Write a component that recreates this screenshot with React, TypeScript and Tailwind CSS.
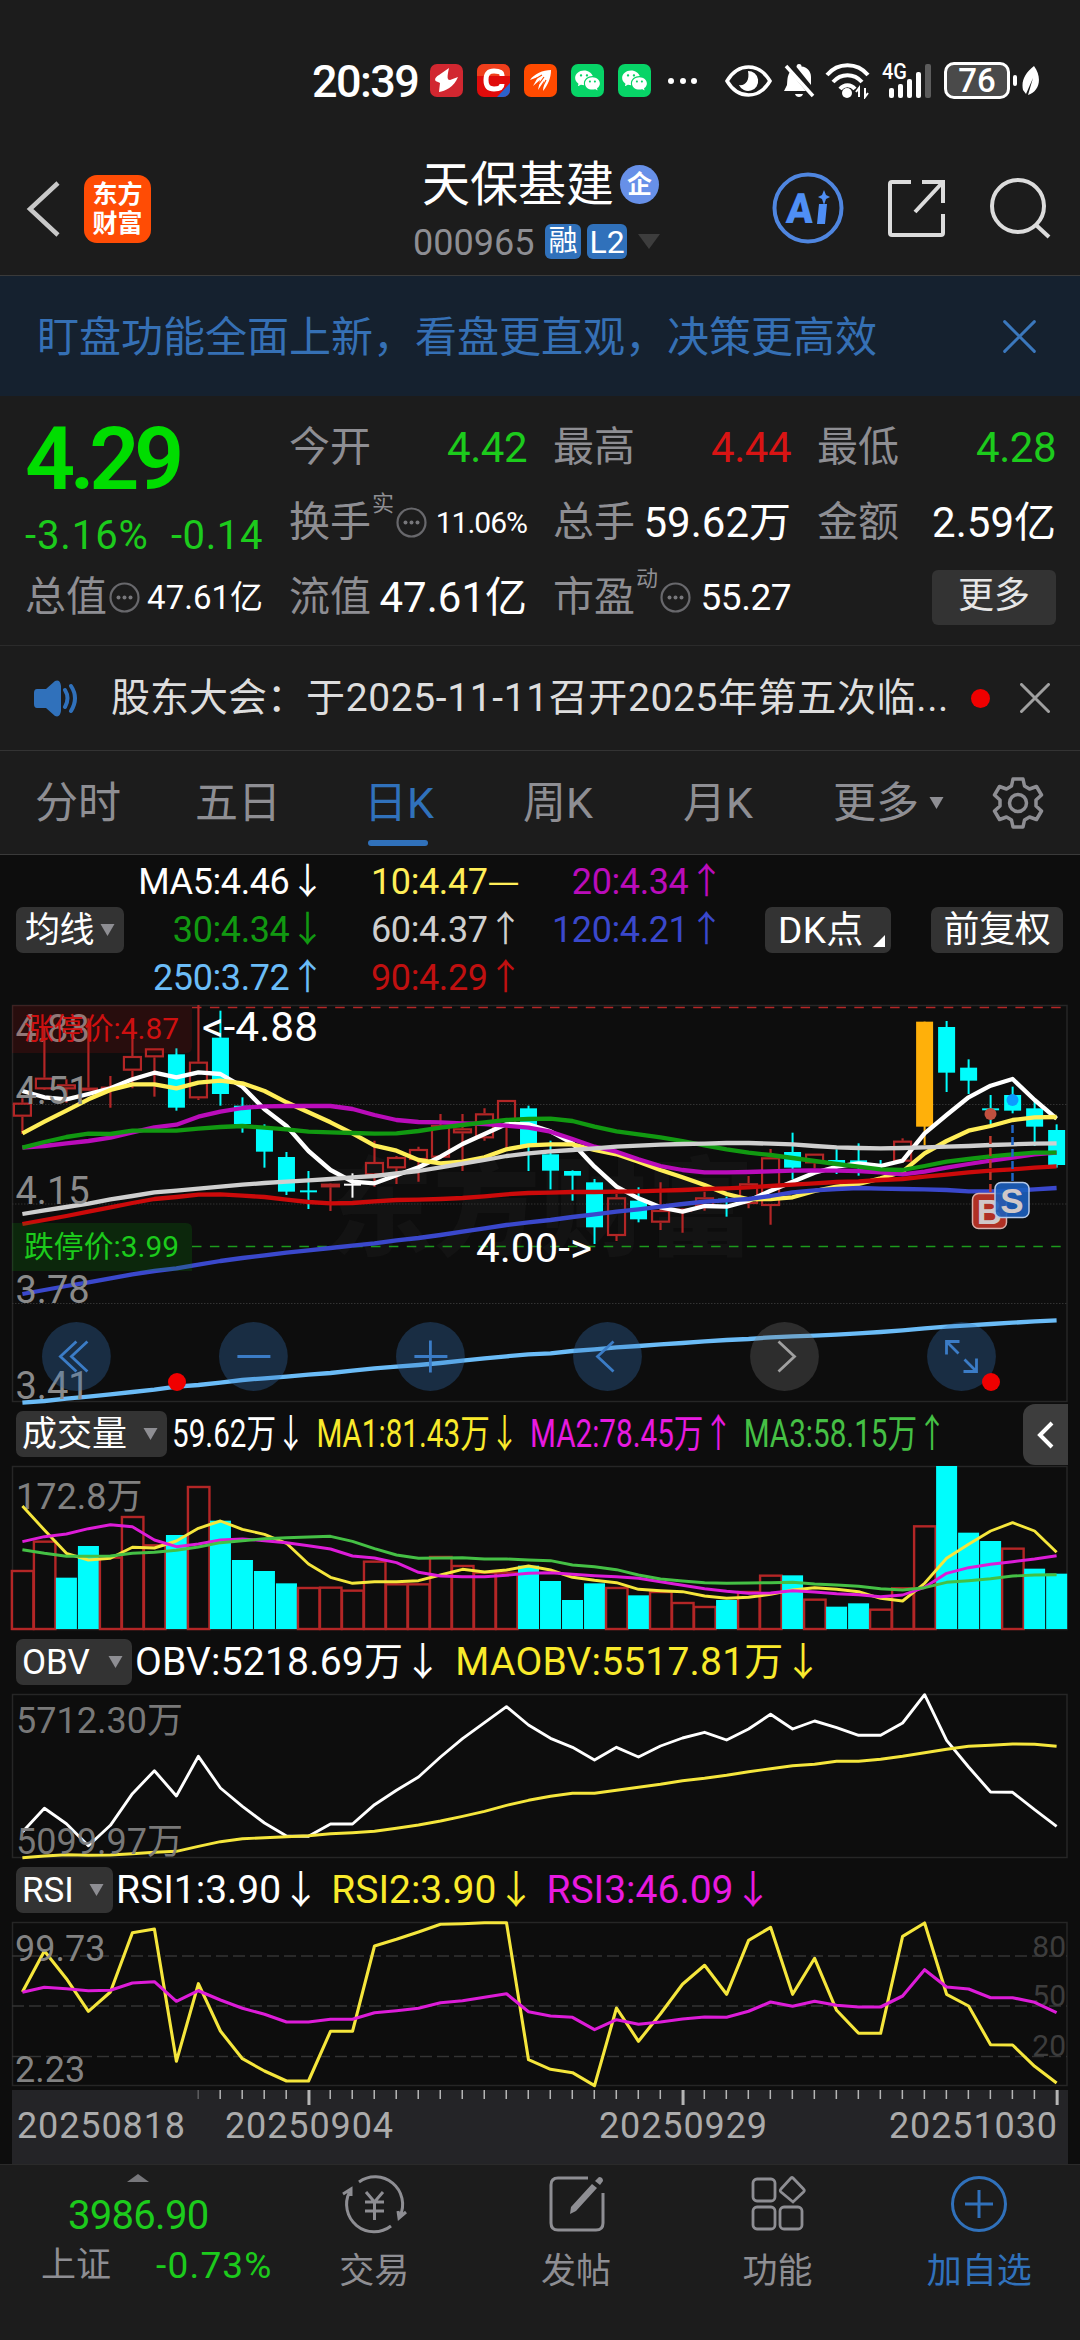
import type { ReactNode } from "react";
import { RiWechatFill } from "react-icons/ri";

// Plot values are stored as depth below the panel top, 3 units per pixel.
const STEP = 22.005;
const px = (i: number) => 10.4 + i * STEP;

// [kind, body top, body bottom, high, low]
type Candle = ["r" | "c" | "w" | "o", number, number, number, number];

const CANDLES: Candle[] = [
  ["r", 338, 380, 325, 432], ["r", 263, 298, 110, 300], ["r", 283, 298, 268, 338],
  ["r", 293, 300, 85, 300], ["r", 290, 298, 258, 353], ["r", 198, 242, 85, 295],
  ["r", 175, 202, 175, 320], ["c", 193, 353, 175, 362], ["r", 215, 325, 45, 330],
  ["c", 143, 312, 62, 347], ["c", 347, 402, 322, 428], ["c", 415, 485, 403, 533],
  ["c", 501, 605, 486, 615], ["c", 601, 604, 543, 657], ["r", 581, 592, 580, 663],
  ["w", 581, 585, 550, 623], ["r", 516, 556, 452, 590], ["r", 501, 535, 498, 582],
  ["r", 477, 510, 470, 575], ["r", 405, 503, 372, 503], ["r", 415, 430, 372, 543],
  ["r", 370, 445, 355, 452], ["r", 330, 408, 330, 475], ["c", 355, 465, 347, 543],
  ["c", 493, 542, 452, 598], ["c", 543, 557, 541, 632], ["c", 577, 712, 567, 762],
  ["r", 622, 738, 612, 753], ["c", 632, 688, 592, 697], ["r", 660, 698, 577, 720],
  ["r", 656, 659, 655, 728], ["r", 622, 648, 605, 662], ["c", 626, 634, 620, 680],
  ["r", 580, 642, 558, 655], ["r", 502, 648, 477, 704], ["c", 486, 533, 428, 568],
  ["r", 491, 520, 491, 535], ["c", 510, 520, 478, 552], ["c", 511, 520, 460, 557],
  ["c", 522, 528, 510, 532], ["r", 452, 515, 445, 515], ["o", 95, 410, 95, 465],
  ["c", 111, 248, 93, 306], ["c", 233, 272, 208, 312], ["c", 355, 360, 315, 405],
  ["c", 315, 362, 290, 370], ["c", 355, 410, 335, 468], ["c", 420, 525, 403, 533],
];

const MA_LINES: { color: string; values: number[] }[] = [
  { color: "#ffffff", values: [303, 322, 328, 312, 295, 268, 248, 262, 247, 252, 290, 358, 408, 483, 540, 575, 580, 556, 532, 500, 462, 432, 402, 403, 424, 460, 530, 590, 625, 652, 665, 648, 650, 632, 602, 575, 548, 530, 520, 528, 512, 430, 375, 322, 287, 267, 330, 386] },
  { color: "#ffee58", values: [430, 395, 362, 328, 300, 283, 283, 295, 278, 272, 280, 303, 337, 367, 397, 430, 467, 482, 510, 520, 515, 502, 478, 466, 463, 463, 480, 493, 515, 540, 562, 585, 612, 628, 627, 622, 603, 590, 582, 565, 545, 490, 453, 422, 408, 390, 382, 381] },
  { color: "#ba0cba", values: [473, 468, 460, 453, 443, 427, 412, 404, 380, 365, 354, 349, 348, 348, 348, 357, 375, 390, 396, 397, 400, 402, 407, 413, 425, 447, 470, 485, 508, 528, 540, 547, 547, 546, 544, 542, 541, 542, 543, 547, 553, 545, 533, 522, 512, 503, 493, 488] },
  { color: "#119911", values: [473, 456, 441, 431, 432, 422, 422, 422, 416, 411, 408, 413, 418, 425, 427, 429, 431, 430, 423, 413, 405, 397, 390, 387, 386, 393, 410, 424, 433, 442, 453, 466, 478, 488, 495, 504, 513, 522, 530, 538, 540, 528, 515, 507, 499, 493, 488, 488] },
  { color: "#cfcfcf", values: [672, 661, 651, 641, 628, 618, 607, 602, 596, 590, 584, 579, 575, 571, 567, 562, 558, 550, 543, 532, 521, 510, 498, 490, 484, 480, 475, 470, 467, 464, 462, 461, 459, 459, 461, 463, 468, 472, 474, 475, 474, 472, 470, 468, 465, 463, 461, 460] },
  { color: "#cc0a0a", values: [702, 690, 678, 665, 652, 639, 627, 621, 614, 613, 617, 621, 629, 636, 640, 639, 634, 630, 629, 627, 624, 619, 613, 609, 608, 606, 606, 605, 604, 602, 600, 597, 595, 592, 588, 584, 580, 576, 574, 570, 567, 560, 554, 547, 542, 538, 533, 529] },
  { color: "#3a48cc", values: [912, 900, 888, 877, 865, 853, 843, 835, 824, 813, 804, 796, 788, 781, 774, 767, 760, 751, 744, 735, 725, 715, 705, 697, 690, 681, 673, 665, 658, 650, 642, 635, 631, 627, 618, 607, 601, 597, 594, 596, 597, 598, 600, 604, 604, 602, 598, 594] },
  { color: "#6bbcf7", values: [1238, 1233, 1226, 1220, 1213, 1206, 1199, 1190, 1185, 1178, 1170, 1165, 1160, 1154, 1149, 1142, 1135, 1130, 1125, 1119, 1112, 1105, 1099, 1093, 1090, 1083, 1078, 1072, 1068, 1063, 1059, 1054, 1050, 1047, 1042, 1039, 1037, 1034, 1030, 1026, 1021, 1015, 1010, 1006, 1002, 998, 994, 991] },
];

// "+" closes up (hollow), "-" closes down (solid)
const VOLUME =
  "510+ 422+ 533- 438- 470+ 348+ 433+ 405- 258+ 362- 480- 513- 550- 561+ 560+ 569+ 482+ 550+ 550+ 468+ 495+ 515+ 515+ 497- 543- 600- 550- 561+ 586- 573+ 606+ 618+ 600- 573+ 524+ 526- 596+ 620- 610- 626+ 562+ 376+ 198- 398- 423- 443+ 506- 521-"
    .split(" ")
    .map((v) => ({ top: parseInt(v, 10), up: v.endsWith("+") }));

const VOL_LINES = [
  { color: "#f5e63c", values: [318, 390, 460, 480, 475, 442, 444, 423, 385, 363, 388, 403, 430, 492, 532, 550, 545, 545, 542, 525, 508, 516, 510, 498, 510, 532, 541, 548, 568, 572, 575, 588, 595, 592, 583, 570, 563, 568, 575, 595, 603, 550, 475, 433, 393, 368, 393, 457] },
  { color: "#dd1cd8", values: [425, 410, 402, 386, 374, 380, 420, 440, 432, 420, 417, 422, 428, 437, 447, 468, 474, 488, 517, 528, 530, 530, 526, 520, 518, 523, 527, 530, 535, 545, 556, 566, 574, 580, 579, 572, 576, 581, 584, 590, 585, 562, 520, 503, 493, 485, 477, 467] },
  { color: "#45c045", values: [449, 460, 469, 469, 468, 460, 457, 451, 441, 428, 422, 416, 413, 411, 409, 424, 446, 465, 475, 474, 473, 477, 477, 480, 482, 495, 500, 509, 525, 537, 543, 548, 550, 549, 548, 547, 552, 555, 559, 566, 570, 563, 547, 542, 536, 528, 525, 524] },
];

const OBV_LINES = [
  { color: "#ffffff", values: [575, 504, 550, 616, 555, 460, 391, 467, 348, 443, 498, 548, 587, 588, 551, 551, 493, 450, 410, 350, 295, 247, 199, 254, 294, 321, 359, 321, 350, 317, 293, 276, 299, 266, 222, 266, 242, 262, 285, 285, 248, 163, 300, 380, 455, 456, 508, 558] },
  { color: "#f5e63c", values: [652, 647, 643, 645, 644, 640, 636, 633, 618, 604, 595, 592, 589, 586, 580, 577, 573, 564, 554, 542, 528, 513, 495, 480, 468, 459, 459, 450, 441, 432, 421, 414, 405, 394, 385, 376, 372, 363, 363, 357, 348, 337, 327, 318, 315, 311, 312, 318] },
];

const RSI_LINES = [
  { color: "#f5e63c", values: [395, 272, 355, 453, 395, 217, 206, 603, 370, 512, 595, 632, 662, 662, 513, 513, 257, 237, 215, 192, 190, 187, 187, 598, 627, 637, 676, 443, 543, 460, 372, 315, 402, 240, 201, 402, 294, 450, 519, 519, 228, 188, 402, 437, 553, 554, 618, 668] },
  { color: "#dd1cd8", values: [396, 381, 385, 391, 390, 368, 364, 423, 391, 419, 444, 462, 485, 485, 477, 477, 457, 451, 444, 427, 421, 411, 400, 454, 467, 471, 508, 478, 492, 485, 476, 470, 471, 453, 425, 438, 423, 435, 440, 440, 407, 328, 380, 386, 412, 412, 426, 457] },
];

const RED = "#b32626";
const CYAN = "#00fdfd";

function Line({ values, color, base, width }: { values: number[]; color: string; base: number; width: number }) {
  const points = values.map((v, i) => `${px(i).toFixed(1)},${((v - base) / 3).toFixed(1)}`).join(" ");
  return <polyline points={points} fill="none" stroke={color} strokeWidth={width} strokeLinejoin="round" />;
}

function Panel({ height, children }: { height: number; children: ReactNode }) {
  return (
    <svg className="mx-3 block overflow-visible" width="1056" height={height} viewBox={`0 0 1056 ${height}`}>
      <rect x="0.5" y="0.5" width="1054.5" height={height - 1} fill="none" stroke="#262626" strokeWidth="1.5" />
      {children}
    </svg>
  );
}

function Triangle({ className }: { className?: string }) {
  return (
    <svg className={className} width="15" height="12" viewBox="0 0 14 12" fill="#8e8e93">
      <path d="M0 0h14L7 12z" />
    </svg>
  );
}

function Cross({ size, color, width }: { size: number; color: string; width: number }) {
  return (
    <svg width={size} height={size} viewBox="0 0 30 30" stroke={color} strokeWidth={width} strokeLinecap="round">
      <path d="M1.500 1.500 28.500 28.500M28.500 1.500 1.500 28.500" />
    </svg>
  );
}

function StatusBar() {
  return (
    <div className="flex h-[130px] items-center pt-[31px] pl-[312px] text-white">
      <span className="w-[118px] pt-[2px] text-[45px] leading-none font-medium tracking-[-1.600px]">20:39</span>
      <div className="flex gap-[14px]">
        <svg width="33" height="33" viewBox="0 0 33 33">
          <rect width="33" height="33" rx="7" fill="#d12730" />
          <path d="M19 4 9 11c-5 3-5 6-1 7l2 1-1 9c6-1 15-5 19-15l-8 3c-3 0-3-3-1-12z" fill="#fff" />
        </svg>
        <svg width="33" height="33" viewBox="0 0 33 33">
          <rect width="33" height="33" rx="7" fill="#e00b0b" />
          <path d="M0 12V7a7 7 0 0 1 7-7h19a7 7 0 0 1 7 7v5z" fill="#ef3f1c" />
          <path d="M33 19v7a7 7 0 0 1-7 7h-6z" fill="#2b62cc" />
          <path d="M25 12v-1c0-3-3-4-8-4s-8 2-8 9 3 9 8 9 8-1 8-5" fill="none" stroke="#fff" strokeWidth="5" />
        </svg>
        <svg width="33" height="33" viewBox="0 0 33 33">
          <rect width="33" height="33" rx="7" fill="#ff4a00" />
          <path d="M27 6C19 6 10 10 6 16l8-3-5 9 7-6-2 10 6-9-1 10c5-6 8-13 8-21z" fill="#fff" />
          <path d="m8 17 10-6M12 24l8-11M16 28l6-12" stroke="#ff4a00" strokeWidth="1.200" />
        </svg>
        {[0, 1].map((n) => (
          <span key={n} className="flex h-[33px] w-[33px] items-center justify-center rounded-[7px] bg-[#07d467]">
            <RiWechatFill size={27} />
          </span>
        ))}
      </div>
      <div className="ml-[17px] flex w-[29px] justify-between">
        <i className="h-[6px] w-[6px] rounded-full bg-white" />
        <i className="h-[6px] w-[6px] rounded-full bg-white" />
        <i className="h-[6px] w-[6px] rounded-full bg-white" />
      </div>
      <svg className="ml-[28px]" width="47" height="32" viewBox="0 0 47 32">
        <path d="M2 16C8 6 15 2 23.500 2S39 6 45 16C39 26 32 30 23.500 30S8 26 2 16z" fill="none" stroke="#fff" strokeWidth="3.500" />
        <path d="M23 6a10 10 0 1 1-9 14c6 1 11-4 9-14z" fill="#fff" />
      </svg>
      <svg className="ml-[11px]" width="32" height="36" viewBox="0 0 32 36">
        <path d="M16 1c-2 0-2.500 1.500-2.500 3L28 22V14c0-6-4-10-9.500-10.500C18.500 2 18 1 16 1zM7 9c-3 4-2.500 9-3 13l-3 6h22zM12 31h8c-1 4-7 4-8 0z" fill="#fff" />
        <path d="m3 3 27 30" stroke="#fff" strokeWidth="3.500" />
      </svg>
      <svg className="ml-[10px]" width="45" height="36" viewBox="0 0 45 36" fill="none" stroke="#fff" strokeWidth="4">
        <path d="M2 12C13-1 32-1 43 12M8 19c8-9 21-9 29 0M15 26c4-5 11-5 15 0" />
        <circle cx="22" cy="30" r="5" fill="#fff" stroke="none" />
        <path d="M34 34v-9l-3 4M40 25v9l3-4" strokeWidth="2" />
      </svg>
      <svg className="ml-[12px] overflow-visible" width="50" height="36" viewBox="0 0 50 36">
        <text x="0" y="16" fontSize="22" fontWeight="500" fill="#fff" textLength="25" lengthAdjust="spacingAndGlyphs">4G</text>
        <g fill="#fff">
          <rect x="7" y="25" width="5" height="10" rx="2" />
          <rect x="16" y="21" width="5" height="14" rx="2" />
          <rect x="25" y="16" width="5" height="19" rx="2" />
          <rect x="34" y="9" width="5" height="26" rx="2" />
          <rect x="43" y="1" width="6" height="34" rx="2" fill="#5c5c5c" />
        </g>
      </svg>
      <span className="ml-[12px] flex h-[37px] w-[66px] items-center justify-center rounded-[10px] border-[3px] border-white bg-[#4a4a4a] text-[33px] leading-none font-medium">
        76
      </span>
      <i className="ml-[3px] h-[11px] w-[4px] rounded-sm bg-white" />
      <svg className="ml-[5px]" width="19" height="30" viewBox="0 0 19 30">
        <path d="M12 0C3 7-1 15 1 24l3 4L11 12 6 29c11-3 15-17 6-29z" fill="#fff" />
      </svg>
    </div>
  );
}

function Header() {
  return (
    <div className="relative flex h-[146px] items-center border-b border-[#3a3a3a] px-[26px] pt-[12px]">
      <svg width="34" height="56" viewBox="0 0 34 56" fill="none" stroke="#c8c8c8" strokeWidth="4.500">
        <path d="M32 2 4 28l28 26" />
      </svg>
      <div className="ml-[24px] flex h-[68px] w-[67px] flex-col items-center justify-center rounded-[13px] bg-[#ff4c05] text-[25px] leading-[29px] font-bold text-white">
        <span>东方</span>
        <span>财富</span>
      </div>
      <div className="ml-[262px] flex w-[266px] flex-col pt-[3px]">
        <div className="ml-[9px] flex items-center">
          <span className="text-[48px] leading-[56px] whitespace-nowrap text-white">天保基建</span>
          <span className="ml-[6px] flex h-[39px] w-[39px] shrink-0 items-center justify-center rounded-full bg-[#6790e8] text-[25px] font-bold text-white">
            企
          </span>
        </div>
        <div className="mt-[7px] flex h-[44px] items-center">
          <span className="w-[132px] pt-[2px] text-[36px] leading-none text-[#8e8e93]">000965</span>
          <span className="flex h-[35px] w-[36px] items-center justify-center rounded-[6px] bg-[#3071bb] text-[29px] leading-none text-white">融</span>
          <span className="ml-[6px] flex h-[35px] w-[40px] items-center justify-center rounded-[6px] bg-[#3071bb] text-[32px] leading-none text-white">L2</span>
          <svg className="ml-[11px]" width="22" height="15" viewBox="0 0 22 15">
            <path d="M0 0h22L11 15z" fill="#3d3d3d" />
          </svg>
        </div>
      </div>
      <svg className="absolute top-[42px] left-[772px]" width="72" height="72" viewBox="0 0 72 72">
        <circle cx="36" cy="36" r="33.500" fill="none" stroke="#4f86e0" strokeWidth="4" />
        <text x="17" y="51" fontSize="42" fontWeight="900" fill="#4f8ff5" transform="skewX(-4)" textLength="27" lengthAdjust="spacingAndGlyphs">A</text>
        <path d="M47 32h8l-2 20h-8zM52 18l2 5 4 2-4 2-2 6-2-6-4-2 4-2z" fill="#4f8ff5" />
      </svg>
      <svg className="absolute top-[49px] left-[887px]" width="59" height="59" viewBox="0 0 59 59" fill="none" stroke="#dcdcdc" strokeWidth="4">
        <path d="M24 3H5q-2 0-2 2v49q0 2 2 2h49q2 0 2-2V35M35 3h21v21M55 4 28 33" />
      </svg>
      <svg className="absolute top-[47px] left-[990px]" width="62" height="62" viewBox="0 0 62 62" fill="none" stroke="#dcdcdc" strokeWidth="4">
        <circle cx="28" cy="29" r="26" />
        <path d="m46 48 13 12" />
      </svg>
    </div>
  );
}

function Banner() {
  return (
    <div className="flex h-[120px] items-center bg-[#15212f] pl-[37px]">
      <span className="w-[966px] pt-[3px] text-[42px] leading-none text-[#3570b5]">盯盘功能全面上新，看盘更直观，决策更高效</span>
      <Cross size={33} color="#3b78bd" width={2.7} />
    </div>
  );
}

function Info() {
  return (
    <svg className="ml-[2px]" width="31" height="31" viewBox="0 0 31 31" fill="#77777b">
      <circle cx="15.500" cy="15.500" r="14" fill="none" stroke="#68686c" strokeWidth="2.200" />
      <circle cx="9.500" cy="15.500" r="2" />
      <circle cx="15.500" cy="15.500" r="2" />
      <circle cx="21.500" cy="15.500" r="2" />
    </svg>
  );
}

function Quote({ label, sup, info, children }: { label: string; sup?: string; info?: boolean; children: ReactNode }) {
  return (
    <div className="flex h-[75px] items-center justify-between whitespace-nowrap">
      <span className="flex items-center text-[41px] leading-none text-[#8e8e93]">
        {label}
        {sup && <sup className="top-[-19px] ml-[1px] text-[22px] leading-none">{sup}</sup>}
        {info && <Info />}
      </span>
      {children}
    </div>
  );
}

function Quotes() {
  return (
    <div className="flex h-[250px] gap-[26px] border-b border-[#2b2b2b] pt-[14px] pr-[24px] pl-[25px] text-[42px] leading-none text-white">
      <div className="w-[238px]">
        <div className="h-[92px] pt-[5px] text-[88px] leading-none font-semibold tracking-[-5.500px] text-[#00dd00]">4.29</div>
        <div className="flex h-[58px] items-center justify-between pt-[9px] text-[40px] text-[#1ccb1c]">
          <span className="tracking-[0.900px]">-3.16%</span>
          <span className="tracking-[0.600px]">-0.14</span>
        </div>
        <Quote label="总值" info>
          <span className="text-[33px]">47.61亿</span>
        </Quote>
      </div>
      <div className="w-[238px]">
        <Quote label="今开"><span className="tracking-[-0.500px] text-[#1ccb1c]">4.42</span></Quote>
        <Quote label="换手" sup="实" info><span className="text-[30px] tracking-[-1px]">11.06%</span></Quote>
        <Quote label="流值"><span>47.61亿</span></Quote>
      </div>
      <div className="w-[238px]">
        <Quote label="最高"><span className="tracking-[-0.500px] text-[#d81414]">4.44</span></Quote>
        <Quote label="总手"><span>59.62万</span></Quote>
        <Quote label="市盈" sup="动" info><span className="text-[37px] tracking-[-0.500px]">55.27</span></Quote>
      </div>
      <div className="w-[239px]">
        <Quote label="最低"><span className="tracking-[-0.500px] text-[#1ccb1c]">4.28</span></Quote>
        <Quote label="金额"><span>2.59亿</span></Quote>
        <div className="flex h-[75px] items-center justify-end">
          <span className="flex h-[55px] w-[124px] items-center justify-center rounded-[6px] bg-[#333] pb-[4px] text-[36px] text-[#e6e6e6]">更多</span>
        </div>
      </div>
    </div>
  );
}

function News() {
  return (
    <div className="flex h-[105px] items-center border-b border-[#333] pl-[33px]">
      <svg width="46" height="37" viewBox="0 0 46 37">
        <path d="M4 9h9l9-8q5-2 6 5v25q-1 7-6 5l-9-8H4q-3 0-3-4V13q0-4 3-4z" fill="#3071bb" />
        <path d="M32 10q5 8 0 17M38 6q8 12 0 25" fill="none" stroke="#3071bb" strokeWidth="4" strokeLinecap="round" />
      </svg>
      <span className="ml-[32px] w-[860px] text-[39px] leading-none whitespace-nowrap text-[#dedede]">
        股东大会：<span className="tracking-[0.620px]">于2025-11-11召开2025年第五次临...</span>
      </span>
      <i className="h-[19px] w-[19px] rounded-full bg-[#f00000]" />
      <span className="ml-[30px]"><Cross size={30} color="#a0a0a0" width={3} /></span>
    </div>
  );
}

const TABS = ["分时", "五日", "日K", "周K", "月K"];

function Tabs() {
  return (
    <div className="flex h-[104px] items-center border-b border-[#3a3a3a] text-[43px] leading-none text-[#8e8e93]">
      {TABS.map((t) => (
        <div
          key={t}
          className={t === "日K" ? "relative flex h-full w-[160px] items-center justify-center pt-[2px] pr-[2px] text-[#3071bb]" : "flex h-full w-[160px] items-center justify-center pt-[2px] pr-[4px]"}
        >
          {t}
          {t === "日K" && <i className="absolute bottom-[8px] left-[48px] h-[6px] w-[60px] rounded-full bg-[#3071bb]" />}
        </div>
      ))}
      <span className="ml-[33px] w-[96px] pt-[2px]">更多</span>
      <Triangle />
      <svg className="ml-[48px]" width="52" height="52" viewBox="0 0 52 52" fill="none" stroke="#8e8e93" strokeWidth="3.500" strokeLinejoin="round">
        <path d="M21 2h10l1.500 7 5 3 7-2.500 5 8.500-5.500 5v6l5.500 5-5 8.500-7-2.500-5 3-1.500 7H21l-1.500-7-5-3-7 2.500-5-8.500L8 29v-6l-5.500-5 5-8.500 7 2.500 5-3z" />
        <circle cx="26" cy="26" r="8.500" />
      </svg>
    </div>
  );
}

const PILL = "flex h-[46px] shrink-0 items-center rounded-[7px] bg-[#333] text-[35px] leading-none text-white";

function MaLegend() {
  return (
    <div className="flex h-[150px] items-center pl-4 text-[36px] leading-[48px] tracking-[-0.400px] whitespace-nowrap text-white">
      <div className={`${PILL} w-[108px] pl-[9px]`}>
        均线
        <Triangle className="ml-[6px]" />
      </div>
      <div className="grid grid-cols-[201px_204px_195px] grid-rows-[48px_48px_48px]">
        <span className="text-right">MA5:4.46↓</span>
        <span className="pl-[46px] text-[#ffee58]">10:4.47<span className="font-['Noto_Sans_CJK_SC'] leading-none">—</span></span>
        <span className="text-right text-[#ba0cba]">20:4.34↑</span>
        <span className="text-right text-[#119911]">30:4.34↓</span>
        <span className="pl-[46px] text-[#cfcfcf]">60:4.37↑</span>
        <span className="text-right text-[#3a48cc]">120:4.21↑</span>
        <span className="text-right text-[#6bbcf7]">250:3.72↑</span>
        <span className="pl-[46px] text-[#c01010]">90:4.29↑</span>
      </div>
      <div className={`${PILL} relative ml-[41px] w-[126px] pl-[13px]`}>
        <span className="text-[37px] tracking-[0.400px]">DK点</span>
        <svg className="absolute right-[6px] bottom-[6px]" width="12" height="12" viewBox="0 0 12 12">
          <path d="M12 0v12H0z" fill="#fff" />
        </svg>
      </div>
      <div className={`${PILL} ml-[40px] w-[132px] justify-center`}>
        <span className="text-[36px]">前复权</span>
      </div>
    </div>
  );
}

function CandleMark({ i, c }: { i: number; c: Candle }) {
  const [kind, top, bottom, high, low] = c;
  const y = (v: number) => (v - 45) / 3;
  const x = px(i);
  const color = { r: RED, c: CYAN, w: "#fff", o: "#ffb00a" }[kind];
  if (kind === "r") {
    return (
      <g stroke={color} strokeWidth="2.200" fill="none">
        <path d={`M${x} ${y(high)}V${y(top)}M${x} ${y(bottom)}V${y(low)}`} />
        <rect x={x - 8.5} y={y(top) + 1} width="17" height={Math.max(y(bottom) - y(top) - 2, 1)} />
      </g>
    );
  }
  return (
    <g fill={color}>
      <rect x={x - 1} y={y(high)} width="2" height={y(low) - y(high)} />
      <rect x={x - 8.5} y={y(top)} width="17" height={Math.max(y(bottom) - y(top), 2)} />
    </g>
  );
}

const BUTTONS = [
  { cx: 64.4, d: "M0-15-16 0 0 15M11-15-5 0 11 15" },
  { cx: 241.4, d: "M-16 0H17" },
  { cx: 418.4, d: "M-16 0H17M0-16V16" },
  { cx: 595.5, d: "M6-15-10 0 6 15" },
  { cx: 772.5, d: "M-6-15 10 0-6 15", dim: true },
  { cx: 949.5, d: "M-2-15H-15V-2M-15-15-3-3M3 3 15 15M2 15H15V2" },
];

function KChart() {
  return (
    <Panel height={397}>
      <text x="314" y="242" fontSize="107" fontWeight="900" fill="#131313">东方财富</text>
      <g stroke="#333" strokeDasharray="1.500 1.500">
        <path d="M0 99.500H1055M0 199H1055M0 298.500H1055" />
      </g>
      <g fill="none" strokeWidth="1.500" strokeDasharray="9.500 8.400">
        <path d="M180 2.500H1055" stroke="#b32626" />
        <path d="M180 241.500H1055" stroke="#1d9a1d" />
      </g>
      {CANDLES.map((c, i) => (
        <CandleMark key={i} i={i} c={c} />
      ))}
      {MA_LINES.map((l) => (
        <Line key={l.color} {...l} base={45} width={4.3} />
      ))}
      {/* trade markers */}
      <g fill="none" strokeWidth="2.500" strokeDasharray="8 4">
        <path d="M978.400 131V188" stroke="#c0392b" />
        <path d="M1000.500 120V178" stroke="#1f66c8" />
      </g>
      <circle cx="978.500" cy="109" r="6" fill="#c0503f" />
      <circle cx="1000.500" cy="95" r="6" fill="#0d9bff" />
      <g fontSize="35" fontWeight="700" fill="#d0c8c8" textAnchor="middle" fontFamily="Liberation Sans">
        <rect x="960.500" y="188.500" width="34" height="35" rx="6" fill="#b03024" stroke="#d8b0ac" strokeWidth="1.500" />
        <text x="977.500" y="219">B</text>
        <rect x="983" y="177.500" width="34" height="35" rx="6" fill="#1c5fbe" fillOpacity="0.900" stroke="#b4c8e8" strokeWidth="1.500" />
        <text x="1000" y="208">S</text>
      </g>
      <g fontSize="38" fill="#8a8a8a">
        <text x="3.500" y="37">4.88</text>
        <text x="3.500" y="98.500">4.51</text>
        <text x="3.500" y="198.500">4.15</text>
        <text x="3.500" y="298">3.78</text>
        <text x="3.500" y="394">3.41</text>
      </g>
      <path d="M0 0H180V42q0 6-6 6H0z" fill="#c01010" fillOpacity="0.150" />
      <path d="M0 218H174q6 0 6 6V266H0z" fill="#0c900c" fillOpacity="0.200" />
      <text x="12" y="34" fontSize="30" fill="#cf1010" textLength="155" lengthAdjust="spacingAndGlyphs">涨停价:4.87</text>
      <text x="12" y="252" fontSize="30" fill="#1ccb1c" textLength="155" lengthAdjust="spacingAndGlyphs">跌停价:3.99</text>
      <text x="190" y="36" fontSize="40" fill="#fff" textLength="116" lengthAdjust="spacingAndGlyphs">&lt;-4.88</text>
      <text x="464" y="257" fontSize="40" fill="#fff" textLength="116" lengthAdjust="spacingAndGlyphs">4.00-&gt;</text>
      {BUTTONS.map((b) => (
        <g key={b.cx} transform={`translate(${b.cx} 351.500)`}>
          <circle r="34.400" fill={b.dim ? "#787878" : "#3477c0"} fillOpacity="0.300" />
          <path d={b.d} fill="none" stroke={b.dim ? "#a0a0a0" : "#3b7cc6"} strokeWidth="2.800" />
        </g>
      ))}
      <circle cx="165" cy="377" r="9" fill="#f00000" />
      <circle cx="979" cy="377" r="9" fill="#f00000" />
    </Panel>
  );
}

function VolumeChart() {
  return (
    <Panel height={164}>
      {VOLUME.map(({ top, up }, i) => {
        const y = (top - 198) / 3;
        return up ? (
          <rect key={i} x={px(i) - 10.5} y={y + 1} width="21.500" height={162 - y} fill="none" stroke={RED} strokeWidth="2.400" />
        ) : (
          <rect key={i} x={px(i) - 10.5} y={y} width="21" height={163 - y} fill={CYAN} />
        );
      })}
      <text x="4" y="43" fontSize="36" fill="#808080">172.8万</text>
      {VOL_LINES.map((l) => (
        <Line key={l.color} {...l} base={198} width={2.9} />
      ))}
    </Panel>
  );
}

function ObvChart() {
  return (
    <Panel height={164}>
      {OBV_LINES.map((l) => (
        <Line key={l.color} {...l} base={161} width={2.9} />
      ))}
      <g fontSize="36" fill="#808080" fillOpacity="0.950">
        <text x="4" y="39" textLength="167">5712.30万</text>
        <text x="4" y="160" textLength="167">5099.97万</text>
      </g>
    </Panel>
  );
}

function RsiChart() {
  return (
    <Panel height={164}>
      <path d="M0 34H1055M0 84H1055M0 134.500H1055" stroke="#333" strokeWidth="1.500" strokeDasharray="12 5" />
      <g fontSize="30" fill="#3d3d3d" textAnchor="end">
        <text x="1054" y="35">80</text>
        <text x="1054" y="84">50</text>
        <text x="1054" y="134">20</text>
      </g>
      {RSI_LINES.map((l) => (
        <Line key={l.color} {...l} base={185} width={3.1} />
      ))}
      <g fontSize="36" fill="#8a8a8a" fillOpacity="0.950">
        <text x="3" y="39">99.73</text>
        <text x="3" y="160">2.23</text>
      </g>
    </Panel>
  );
}

function TimeAxis() {
  return (
    <svg className="mx-3 mt-1 block bg-[#242427]" width="1056" height="74" viewBox="0 0 1056 74">
      {CANDLES.map((_, i) => {
        if (i < 8) return null;
        const major = i === 13 || i === 30 || i === 47;
        return (
          <rect key={i} x={px(i) - 1} y="0" width={major ? 3 : 1.5} height={major ? 15 : 9} fill="#b5b5b5" opacity={i === 8 ? 0.4 : 1} />
        );
      })}
      <g fontSize="36" fill="#ababab">
        <text x="5" y="48" textLength="168">20250818</text>
        <text x="213" y="48" textLength="168">20250904</text>
        <text x="587" y="48" textLength="168">20250929</text>
        <text x="877" y="48" textLength="168">20251030</text>
      </g>
    </svg>
  );
}

function IndicatorBar({ name, pill, gap, children }: { name: string; pill: string; gap: string; children: ReactNode }) {
  return (
    <div className="flex h-[64px] items-center pl-4 text-[39px] leading-none whitespace-nowrap">
      <div className={`${PILL} ${pill} justify-between pr-[9px] pl-[6px]`}>
        {name}
        <Triangle />
      </div>
      <div className={gap}>{children}</div>
    </div>
  );
}

function BottomNav() {
  return (
    <div className="flex h-[176px] border-t border-[#2a2a2a] text-[35px] leading-none text-[#8e8e93]">
      <div className="flex w-[274px] flex-col items-start">
        <svg className="mt-[9px] ml-[127px]" width="22" height="8" viewBox="0 0 22 8">
          <path d="M0 8h22L11 0z" fill="#77777b" />
        </svg>
        <span className="mt-[14px] ml-[68px] text-[40px] tracking-[-0.700px] text-[#1ccb1c]">3986.90</span>
        <div className="mt-[11px] ml-[41px] flex items-center">
          <span className="w-[115px]">上证</span>
          <span className="text-[37px] tracking-[1.200px] text-[#1ccb1c]">-0.73%</span>
        </div>
      </div>
      <div className="flex w-[202px] flex-col items-center">
        <svg className="mt-[9px]" width="66" height="60" viewBox="0 0 66 60" fill="none" stroke="#8e8e93" strokeWidth="3">
          <path d="M18 8A27.500 27.500 0 0 1 59 42M65 38l-7 6-1-7M50 52A27.500 27.500 0 0 1 8.500 18M2 20l8-5v7" />
          <path d="m25 18 8.500 10 8.500-10M33.500 28v18M24 28h19M24 37h19" />
        </svg>
        <span className="mt-[20px]">交易</span>
      </div>
      <div className="flex w-[202px] flex-col items-center">
        <svg className="mt-[9px]" width="60" height="60" viewBox="0 0 60 60" fill="none" stroke="#8e8e93" strokeWidth="3">
          <path d="M42 4H12q-7 0-7 7v38q0 7 7 7h38q7 0 7-7V19" />
          <path d="m46 10 5 4-21 23-6 3 1-7zM49 7l4-4q4 0 4 4l-3 4z" fill="#8e8e93" stroke="none" />
        </svg>
        <span className="mt-[20px]">发帖</span>
      </div>
      <div className="flex w-[202px] flex-col items-center">
        <svg className="mt-[9px]" width="60" height="60" viewBox="0 0 60 60" fill="none" stroke="#8e8e93" strokeWidth="2.800">
          <rect x="5" y="5" width="22" height="22" rx="4" />
          <rect x="5" y="33" width="22" height="22" rx="4" />
          <rect x="32" y="33" width="22" height="22" rx="4" />
          <path d="m45 4 10.500 11q1.500 1.500 0 3L45 28 33 18q-1.500-1.500 0-3L43 4q1-1 2 0z" />
        </svg>
        <span className="mt-[20px]">功能</span>
      </div>
      <div className="flex w-[202px] flex-col items-center text-[#3071bb]">
        <svg className="mt-[9px]" width="60" height="60" viewBox="0 0 60 60" fill="none" stroke="currentColor" strokeWidth="3">
          <circle cx="30" cy="30" r="26.500" />
          <path d="M16 30h28M30 16v28" />
        </svg>
        <span className="mt-[20px]">加自选</span>
      </div>
    </div>
  );
}

export default function App() {
  return (
    <div className="h-[2340px] w-[1080px] overflow-hidden bg-[#1c1c1c] font-['Roboto','Noto_Sans_CJK_SC',sans-serif]">
      <StatusBar />
      <Header />
      <Banner />
      <Quotes />
      <News />
      <Tabs />
      <div className="bg-[#0d0d0d]">
        <MaLegend />
        <KChart />
        <div className="relative">
          <IndicatorBar name="成交量" pill="w-[151px]" gap="ml-[5px] flex w-0 origin-left scale-x-[0.760] gap-[14px]">
            <span className="text-white">59.62万↓</span>
            <span className="text-[#f9ea2c]">MA1:81.43万↓</span>
            <span className="text-[#e81ae0]">MA2:78.45万↑</span>
            <span className="text-[#45c045]">MA3:58.15万↑</span>
          </IndicatorBar>
          <div className="absolute top-[2px] right-[12px] flex h-[61px] w-[45px] items-center justify-center rounded-l-[12px] bg-[#3d3d3d]">
            <svg width="17" height="28" viewBox="0 0 17 28" fill="none" stroke="#fff" strokeWidth="4">
              <path d="M15 2 3 14l12 12" />
            </svg>
          </div>
        </div>
        <VolumeChart />
        <IndicatorBar name="OBV" pill="w-[116px]" gap="ml-[3px] flex gap-[13px] tracking-[0.200px]">
          <span className="text-white">OBV:5218.69万↓</span>
          <span className="text-[#f9ea2c]">MAOBV:5517.81万↓</span>
        </IndicatorBar>
        <ObvChart />
        <IndicatorBar name="RSI" pill="w-[97px]" gap="ml-[3px] flex gap-[11px]">
          <span className="text-white">RSI1:3.90↓</span>
          <span className="text-[#f9ea2c]">RSI2:3.90↓</span>
          <span className="text-[#e81ae0]">RSI3:46.09↓</span>
        </IndicatorBar>
        <RsiChart />
        <TimeAxis />
      </div>
      <BottomNav />
    </div>
  );
}
